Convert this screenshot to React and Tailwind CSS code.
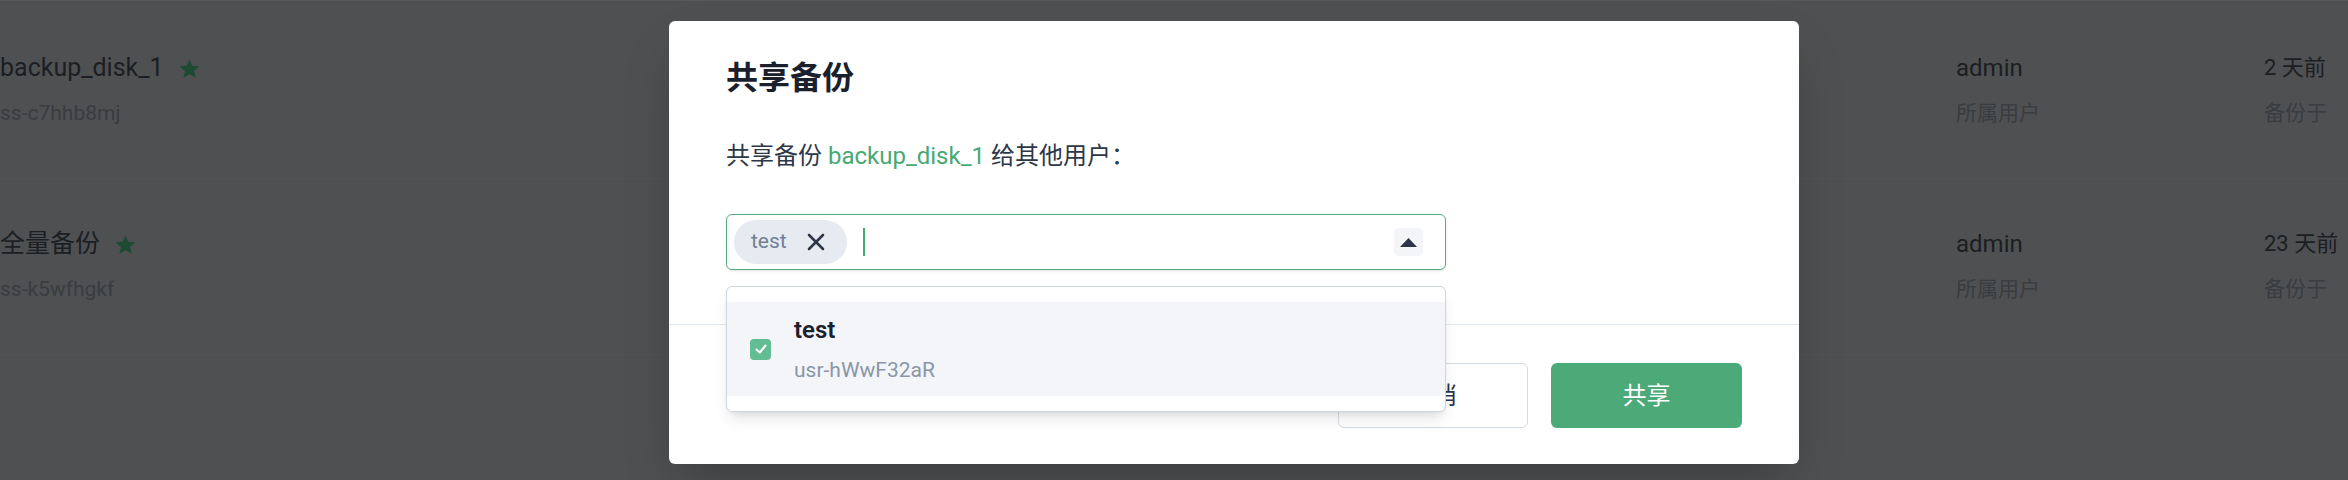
import React from 'react';

const font = { fontFamily: 'Roboto, "Noto Sans CJK SC", sans-serif' };

const rows = [
  { name: 'backup_disk_1', id: 'ss-c7hhb8mj', owner: 'admin', time: '2 天前' },
  { name: '全量备份', id: 'ss-k5wfhgkf', owner: 'admin', time: '23 天前' },
];

const Star = () => (
  <svg width="23" height="23" viewBox="0 0 24 24" className="shrink-0">
    <polygon points="12,2 14.9,9.1 22.5,9.6 16.6,14.5 18.5,22 12,17.9 5.5,22 7.4,14.5 1.5,9.6 9.1,9.1" fill="#1d4a33" />
  </svg>
);

const BackupRow = ({ row }) => (
  <div className="flex h-[176px] items-center border-b border-[#525355]">
    <div className="flex-1 flex flex-col">
      <div className="flex items-center gap-[14px] text-[25px] leading-[32px] text-[#1b1e22]">
        <span>{row.name}</span>
        <Star />
      </div>
      <div className="mt-[14px] text-[21px] leading-[31px] text-[#393c40]">{row.id}</div>
    </div>
    <div className="w-[308px] flex flex-col">
      <div className="text-[24px] leading-[32px] text-[#1b1e22]">{row.owner}</div>
      <div className="mt-[14px] text-[21px] leading-[31px] text-[#393c40]">所属用户</div>
    </div>
    <div className="w-[84px] flex flex-col">
      <div className="text-[22px] leading-[32px] text-[#1b1e22] whitespace-nowrap">{row.time}</div>
      <div className="mt-[14px] text-[21px] leading-[31px] text-[#393c40]">备份于</div>
    </div>
  </div>
);

const ShareModal = () => (
  <div className="absolute left-[669px] top-[21px] w-[1130px] bg-white rounded-[6px] shadow-2xl">
    <div className="pl-[57px] pr-[57px] pt-[33px] pb-[54px]">
      <h2 className="text-[32px] leading-[48px] font-bold text-[#1a202c]">共享备份</h2>
      <p className="mt-[36px] text-[24px] leading-[36px] text-[#2d3748]">
        共享备份 <span className="text-[#48a874]">backup_disk_1</span> 给其他用户：
      </p>
      <div className="relative mt-[40px] w-[720px]">
        <div className="h-[56px] flex items-center border border-[#55ad7f] rounded-[6px] pl-[7px] pr-[22px] shadow-sm">
          <div className="h-[44px] flex items-center rounded-full bg-[#e6eaf1] pl-[17px] pr-[22px] gap-[20px]">
            <span className="text-[21px] text-[#718096]">test</span>
            <svg width="18" height="18" viewBox="0 0 18 18">
              <path d="M2 2 L16 16 M16 2 L2 16" stroke="#2d3748" strokeWidth="2.6" strokeLinecap="round" />
            </svg>
          </div>
          <div className="ml-[16px] w-[2px] h-[28px] bg-[#48a874]" />
          <div className="ml-auto w-[29px] h-[28px] rounded-[5px] bg-[#f4f5f9] flex items-center justify-center">
            <svg width="17" height="9" viewBox="0 0 17 9">
              <polygon points="8.5,0 17,9 0,9" fill="#2d3748" />
            </svg>
          </div>
        </div>
        <div className="absolute left-0 top-[72px] w-[720px] z-10 bg-white border border-[#cdd5df] rounded-[6px] shadow-lg py-[15px]">
          <div className="h-[94px] bg-[#f4f5f9] flex items-center pl-[23px] gap-[23px]">
            <div className="w-[21px] h-[21px] rounded-[4px] bg-[#62bd92] flex items-center justify-center">
              <svg width="14" height="14" viewBox="0 0 14 14">
                <path d="M2.5 7.5 L5.8 10.5 L11.5 3.5" stroke="#fff" strokeWidth="2" fill="none" strokeLinecap="round" strokeLinejoin="round" />
              </svg>
            </div>
            <div className="flex flex-col">
              <span className="text-[24px] leading-[36px] font-semibold text-[#1a202c]">test</span>
              <span className="mt-[7px] text-[21px] leading-[31px] text-[#8a96a8]">usr-hWwF32aR</span>
            </div>
          </div>
        </div>
      </div>
    </div>
    <div className="border-t border-[#e2e8f0] flex justify-end gap-[23px] px-[57px] pt-[38px] pb-[36px]">
      <button className="w-[190px] h-[65px] rounded-[6px] border border-[#d5dbe3] bg-white text-[24px] text-[#2d3748]">取消</button>
      <button className="w-[191px] h-[65px] rounded-[6px] bg-[#4caa78] text-[24px] text-white">共享</button>
    </div>
  </div>
);

export default function App() {
  return (
    <div className="relative w-[2348px] h-[480px] overflow-hidden bg-[#4f5052]" style={font}>
      <div className="border-t border-[#57585a] pt-[2px]">
        {rows.map((row, i) => (
          <BackupRow key={i} row={row} />
        ))}
      </div>
      <ShareModal />
    </div>
  );
}
